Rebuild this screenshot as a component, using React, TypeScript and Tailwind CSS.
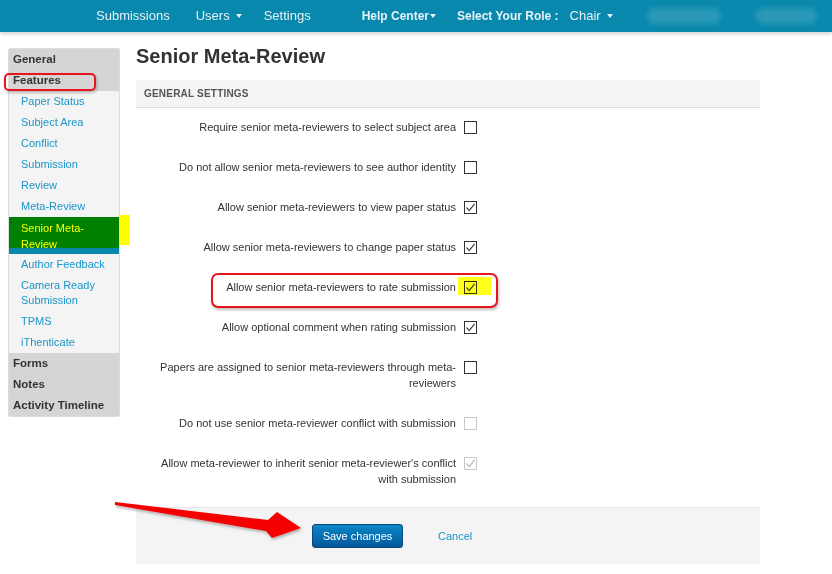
import React from 'react';

const Caret = ({ className = '' }: { className?: string }) => (
  <span className={`inline-block h-0 w-0 border-x-[3.5px] border-t-[4px] border-x-transparent border-t-[#e6f2f6] align-middle ${className}`} />
);

const CheckBox = ({ checked, disabled }: { checked?: boolean; disabled?: boolean }) => (
  <span
    className={`mt-[2px] flex h-[13px] w-[13px] shrink-0 items-center justify-center border bg-white ${
      disabled ? 'border-[#c8c8c8]' : 'border-[#333]'
    }`}
  >
    {checked && (
      <svg width="11" height="11" viewBox="0 0 11 11">
        <path
          d="M1.5 5.5 L4.2 8.4 L9.6 2"
          fill="none"
          stroke={disabled ? '#bdbdbd' : '#555'}
          strokeWidth="1.3"
        />
      </svg>
    )}
  </span>
);

const rows = [
  { label: 'Require senior meta-reviewers to select subject area' },
  { label: 'Do not allow senior meta-reviewers to see author identity' },
  { label: 'Allow senior meta-reviewers to view paper status', checked: true },
  { label: 'Allow senior meta-reviewers to change paper status', checked: true },
  { label: 'Allow senior meta-reviewers to rate submission', checked: true },
  { label: 'Allow optional comment when rating submission', checked: true },
  { label: 'Papers are assigned to senior meta-reviewers through meta-reviewers' },
  { label: 'Do not use senior meta-reviewer conflict with submission', disabled: true },
  { label: "Allow meta-reviewer to inherit senior meta-reviewer's conflict with submission", checked: true, disabled: true },
];

const subItems = ['Paper Status', 'Subject Area', 'Conflict', 'Submission', 'Review', 'Meta-Review'];
const subItems2 = ['Author Feedback', 'Camera Ready Submission', 'TPMS', 'iThenticate'];

const SideHeader = ({ children }: { children: React.ReactNode }) => (
  <div className="bg-[#d5d5d5] px-1 py-[3px] text-[11.5px] font-bold leading-[15px] text-[#333]">{children}</div>
);

const SideLink = ({ children }: { children: React.ReactNode }) => (
  <div className="py-[3px] pl-3 pr-2 text-[11px] leading-[15px] text-[#1a96c9]">{children}</div>
);

export default function App() {
  return (
    <div className="relative h-[574px] w-[832px] overflow-hidden bg-white font-['Liberation_Sans',Arial,sans-serif]">
      {/* top nav */}
      <div className="relative z-10 flex h-[32px] items-center whitespace-nowrap bg-[#0788ac] pl-[96px] text-[13px] text-[#e6f2f6] shadow-[0_2px_4px_rgba(0,0,0,0.18)] [&>*]:shrink-0">
        <span>Submissions</span>
        <span className="ml-[26px] flex items-center gap-[6px]">
          Users <Caret />
        </span>
        <span className="ml-[22px]">Settings</span>
        <span className="ml-[51px] flex items-center gap-[1px] text-[12px] font-bold">
          Help Center<Caret />
        </span>
        <span className="ml-[21px] text-[12px] font-bold">Select Your Role :</span>
        <span className="ml-[11px] flex items-center gap-[6px]">
          Chair <Caret />
        </span>
        <span className="ml-[34px] h-[16px] w-[74px] rounded-full bg-white/15 blur-[3px]" />
        <span className="ml-[34px] h-[16px] w-[62px] rounded-full bg-white/15 blur-[3px]" />
      </div>

      <div className="flex gap-4 pt-3">
        {/* sidebar */}
        <div className="ml-2 mt-1 w-[112px] self-start overflow-hidden rounded-[2px] border border-[#dcdcdc] bg-[#f4f4f4]">
          <SideHeader>General</SideHeader>
          <SideHeader>Features</SideHeader>
          {subItems.map((s) => (
            <SideLink key={s}>{s}</SideLink>
          ))}
          <div className="relative bg-[#0788ac] pb-[2px] pl-3 pr-6 pt-[3px] text-[11px] leading-[16px] text-[#ffff00]">
            <div className="absolute inset-x-0 top-0 h-[31px] bg-[#008000]" />
            <span className="relative">Senior Meta-Review</span>
          </div>
          {subItems2.map((s) => (
            <SideLink key={s}>{s}</SideLink>
          ))}
          <SideHeader>Forms</SideHeader>
          <SideHeader>Notes</SideHeader>
          <SideHeader>Activity Timeline</SideHeader>
        </div>

        {/* main */}
        <div className="w-[624px]">
          <h1 className="text-[20px] font-bold leading-[24px] text-[#333]">Senior Meta-Review</h1>
          <div className="mt-3">
            <div className="flex h-[28px] items-center border-b border-[#dedede] bg-[#f4f4f4] pl-2 text-[10px] font-bold tracking-[0.2px] text-[#555]">
              GENERAL SETTINGS
            </div>
            <div className="pb-[7px]">
              {rows.map((r) => (
                <div key={r.label} className="flex pb-[13px] pl-[15px] pt-[11px]">
                  <div className="w-[305px] text-right text-[11px] leading-[16px] text-[#333]">{r.label}</div>
                  <div className="ml-2">
                    <CheckBox checked={r.checked} disabled={r.disabled} />
                  </div>
                </div>
              ))}
            </div>
            <div className="flex items-center border-t border-[#e6e6e6] bg-[#f4f4f4] pb-4 pl-[176px] pt-4">
              <button className="h-[24px] w-[91px] rounded-[3px] border border-[#04497f] bg-gradient-to-b from-[#0b87c4] to-[#05579d] text-[11px] text-white">
                Save changes
              </button>
              <span className="ml-[35px] text-[11px] text-[#1a96c9]">Cancel</span>
            </div>
          </div>
        </div>
      </div>

      {/* annotations */}
      <div className="absolute left-[120px] top-[215px] h-[30px] w-[10px] bg-[#ffff00]" />
      <div className="absolute left-[4px] top-[73px] h-[18px] w-[92px] rounded-[5px] border-2 border-[#e8141b] shadow-[1px_2px_3px_rgba(0,0,0,0.25)]" />
      <div className="absolute left-[458px] top-[277px] h-[18px] w-[33px] bg-[#ffff00]/90 mix-blend-multiply" />
      <div className="absolute left-[211px] top-[273px] h-[35px] w-[287px] rounded-[7px] border-2 border-[#e8141b] shadow-[1px_2px_3px_rgba(0,0,0,0.25)]" />
      <svg className="absolute left-0 top-0" width="832" height="574">
        <defs>
          <filter id="sh" x="-10%" y="-50%" width="120%" height="200%">
            <feDropShadow dx="1" dy="2" stdDeviation="1.5" floodColor="#000" floodOpacity="0.3" />
          </filter>
        </defs>
        <polygon
          points="115,502 268,520 277,512 301,528 272,538 266,531 115,505"
          fill="#f40000"
          filter="url(#sh)"
        />
      </svg>
    </div>
  );
}
